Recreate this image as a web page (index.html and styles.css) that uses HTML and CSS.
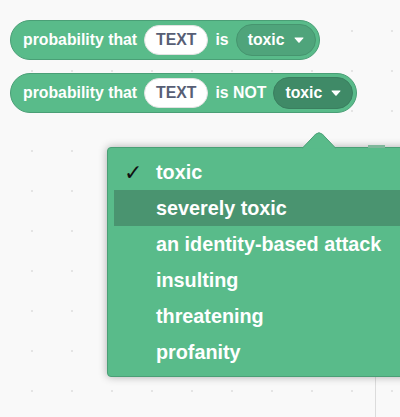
FILE: index.html
```html
<!DOCTYPE html>
<html>
<head>
<meta charset="utf-8">
<link rel="stylesheet" href="styles.css">
</head>
<body>
<div class="canvas">
  <div class="stack">
    <div class="block">
      <span class="label">probability that</span>
      <span class="pill">TEXT</span>
      <span class="label">is</span>
      <span class="dropdown">toxic <svg class="caret" width="10" height="6" viewBox="0 0 10 6"><path d="M1 0.5 H9 Q10 0.5 9.3 1.3 L5.6 5.4 Q5 6 4.4 5.4 L0.7 1.3 Q0 0.5 1 0.5 Z" fill="#fff"/></svg></span>
    </div>
    <div class="block">
      <span class="label">probability that</span>
      <span class="pill">TEXT</span>
      <span class="label">is NOT</span>
      <span class="dropdown open">toxic <svg class="caret" width="10" height="6" viewBox="0 0 10 6"><path d="M1 0.5 H9 Q10 0.5 9.3 1.3 L5.6 5.4 Q5 6 4.4 5.4 L0.7 1.3 Q0 0.5 1 0.5 Z" fill="#fff"/></svg></span>
    </div>
  </div>
  <div class="vline"></div>
  <div class="menu">
    <span class="behind"></span>
    <svg class="arrow" width="34" height="17" viewBox="0 0 34 17"><path d="M0 16.5 L13.6 2.2 Q17 -0.8 20.4 2.2 L34 16.5" fill="#59bb8a" stroke="#4a9f76" stroke-width="1"/></svg>
    <div class="item"><span class="check">✓</span><span>toxic</span></div>
    <div class="item hover"><span class="check"></span><span>severely toxic</span></div>
    <div class="item"><span class="check"></span><span>an identity-based attack</span></div>
    <div class="item"><span class="check"></span><span>insulting</span></div>
    <div class="item"><span class="check"></span><span>threatening</span></div>
    <div class="item"><span class="check"></span><span>profanity</span></div>
  </div>
</div>
</body>
</html>
```
FILE: styles.css
```css
html, body {
  margin: 0;
  padding: 0;
}
body {
  width: 400px;
  height: 417px;
  overflow: hidden;
  background: #f9f9f9;
  font-family: "Liberation Sans", Arial, Helvetica, sans-serif;
}
.canvas {
  position: relative;
  height: 417px;
  background-image: radial-gradient(circle, #e4e4e4 0.8px, transparent 1.3px);
  background-size: 40px 40px;
  background-position: 12px 11px;
}
.stack {
  display: flex;
  flex-direction: column;
  align-items: flex-start;
  gap: 13px;
  padding: 20px 0 0 10px;
}
.block {
  display: flex;
  align-items: center;
  gap: 7px;
  height: 40px;
  box-sizing: border-box;
  padding: 0 3px 0 12px;
  background: #59bb8a;
  border: 1px solid #4a9f76;
  border-radius: 20px;
  color: #fff;
  font-size: 15.8px;
  font-weight: bold;
  white-space: nowrap;
}
.pill {
  display: flex;
  align-items: center;
  height: 30px;
  box-sizing: border-box;
  padding: 0 11px;
  background: #fff;
  border: 1px solid #e2e2e2;
  border-radius: 15px;
  color: #575e75;
}
.dropdown {
  display: flex;
  align-items: center;
  gap: 9px;
  height: 32px;
  box-sizing: border-box;
  padding: 0 11px;
  background: #4fa47b;
  border: 1px solid #46956f;
  border-radius: 16px;
}
.dropdown.open {
  background: #3f8a67;
  border-color: #3a7f5f;
}
.caret {
  display: block;
}
.vline {
  position: absolute;
  left: 375px;
  top: 377px;
  width: 1px;
  height: 40px;
  background: #dcdcdc;
}
.menu {
  position: absolute;
  left: 107px;
  top: 147px;
  width: 310px;
  padding: 6px 0;
  background: #59bb8a;
  border: 1px solid #4a9f76;
  border-radius: 4px;
  box-shadow: 0 0 8px rgba(0, 0, 0, 0.3);
}
.behind {
  position: absolute;
  left: 260px;
  top: -3px;
  width: 17px;
  height: 3px;
  background: #7fb79b;
}
.arrow {
  position: absolute;
  left: 194px;
  top: -16px;
  display: block;
}
.item {
  display: flex;
  align-items: center;
  height: 36px;
  margin-left: 6px;
  color: #fff;
  font-size: 19.8px;
  font-weight: bold;
}
.item.hover {
  background: #4a9470;
}
.check {
  width: 32px;
  padding-left: 10px;
  color: #111;
  font-family: "DejaVu Sans", sans-serif;
  font-weight: bold;
  font-size: 22px;
}
```
